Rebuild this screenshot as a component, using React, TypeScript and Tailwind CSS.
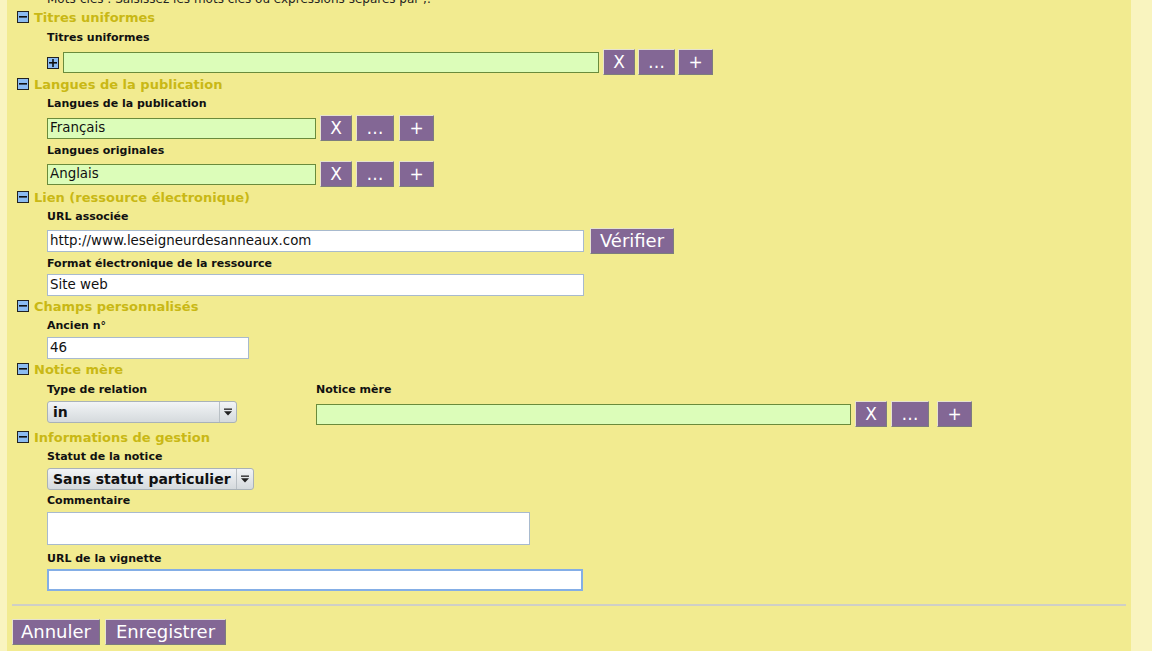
import React from 'react';

const font = { fontFamily: '"DejaVu Sans", Verdana, sans-serif' };

const Toggle = ({ open = true }: { open?: boolean }) => (
  <span className="inline-flex w-[12px] h-[12px] shrink-0 items-center justify-center border border-[#222] bg-[#8cbcf2]">
    <svg width="10" height="10" viewBox="0 0 10 10">
      <rect x="1" y="4" width="8" height="1.6" fill="#111" />
      {!open && <rect x="4.2" y="1" width="1.6" height="8" fill="#111" />}
    </svg>
  </span>
);

const Header = ({ title, h = 'h-[20px]' }: { title: string; h?: string }) => (
  <div className={`flex items-center gap-[5px] pl-[10px] ${h}`}>
    <Toggle />
    <span className="text-[13px] font-bold text-[#c9b815] leading-none">{title}</span>
  </div>
);

const Label = ({ children, h = 'h-[20px]' }: { children: React.ReactNode; h?: string }) => (
  <div className={`flex items-center pl-[40px] text-[11px] font-bold text-[#111] ${h}`}>{children}</div>
);

const Btn = ({ children, w, text = 'text-[17px]' }: { children: React.ReactNode; w: string; text?: string }) => (
  <button
    className={`${w} h-[26px] shrink-0 flex items-center justify-center bg-[#836795] text-white ${text} leading-none border border-t-[#e6e2d0] border-l-[#e6e2d0] border-b-[#7d7d7d] border-r-[#7d7d7d]`}
  >
    {children}
  </button>
);

const GreenInput = ({ w, value = '' }: { w: string; value?: string }) => (
  <div className={`${w} h-[21px] shrink-0 flex items-center px-[2px] bg-[#dcfdb9] border border-[#6a8b3c] text-[13.4px] text-[#111]`}>
    {value}
  </div>
);

const WhiteInput = ({ w, value = '', h = 'h-[22px]', focus = false }: { w: string; value?: string; h?: string; focus?: boolean }) => (
  <div
    className={`${w} ${h} shrink-0 flex items-center px-[2px] bg-white text-[13.4px] text-[#111] ${
      focus ? 'border-2 border-[#84aee6]' : 'border border-[#a8bace]'
    }`}
  >
    {value}
  </div>
);

const Select = ({ w, value }: { w: string; value: string }) => (
  <div className={`${w} h-[22px] shrink-0 flex items-stretch rounded-[3px] border border-[#a9b2b8] bg-gradient-to-b from-[#f2f4f6] to-[#d5dadd] text-[14px] font-bold text-[#111]`}>
    <span className="flex-1 flex items-center pl-[5px] whitespace-nowrap">{value}</span>
    <span className="w-[17px] flex items-center justify-center border-l border-[#b9c0c5]">
      <svg width="10" height="8" viewBox="0 0 10 8">
        <rect x="1" y="0.5" width="8" height="1.3" fill="#222" />
        <path d="M1 3.2 H9 L5 7.5 Z" fill="#222" />
      </svg>
    </span>
  </div>
);

export default function App() {
  return (
    <div className="flex w-[1152px] h-[651px] overflow-hidden bg-[#f9f4bf]" style={font}>
      <div className="w-[7px] shrink-0" />
      <div className="w-[1124px] shrink-0 bg-[#f2eb90] flex flex-col">
        <div className="-mt-[9px] h-[16px] pl-[40px] text-[12px] leading-[16px] text-[#222] whitespace-nowrap">
          Mots-clés : Saisissez les mots clés ou expressions séparés par ;.
        </div>

        <Header title="Titres uniformes" />
        <Label h="h-[22px]">Titres uniformes</Label>
        <div className="h-[26px] flex items-center pl-[40px]">
          <span className="mr-[4px] mt-[1px]"><Toggle open={false} /></span>
          <GreenInput w="w-[536px]" />
          <div className="flex gap-[3px] ml-[4px]">
            <Btn w="w-[32px]">X</Btn>
            <Btn w="w-[37px]">…</Btn>
            <Btn w="w-[35px]">+</Btn>
          </div>
        </div>

        <Header title="Langues de la publication" h="h-[18px]" />
        <Label h="h-[22px]">Langues de la publication</Label>
        <div className="h-[26px] flex items-center pl-[40px] gap-[4px]">
          <GreenInput w="w-[269px]" value="Français" />
          <Btn w="w-[32px]">X</Btn>
          <Btn w="w-[38px]">…</Btn>
          <span className="ml-[1px]"><Btn w="w-[35px]">+</Btn></span>
        </div>
        <Label>Langues originales</Label>
        <div className="h-[26px] flex items-center pl-[40px] gap-[4px]">
          <GreenInput w="w-[269px]" value="Anglais" />
          <Btn w="w-[32px]">X</Btn>
          <Btn w="w-[38px]">…</Btn>
          <span className="ml-[1px]"><Btn w="w-[35px]">+</Btn></span>
        </div>

        <Header title="Lien (ressource électronique)" />
        <Label h="h-[21px]">URL associée</Label>
        <div className="h-[26px] flex items-center pl-[40px] gap-[6px]">
          <WhiteInput w="w-[537px]" value="http://www.leseigneurdesanneaux.com" />
          <Btn w="w-[84px]" text="text-[18px]">Vérifier</Btn>
        </div>
        <Label>Format électronique de la ressource</Label>
        <div className="h-[22px] flex items-center pl-[40px]">
          <WhiteInput w="w-[537px]" value="Site web" />
        </div>

        <Header title="Champs personnalisés" />
        <Label h="h-[21px]">Ancien n°</Label>
        <div className="h-[22px] flex items-center pl-[40px]">
          <WhiteInput w="w-[202px]" value="46" />
        </div>

        <Header title="Notice mère" />
        <div className="h-[22px] flex items-center pl-[40px] text-[11px] font-bold text-[#111]">
          <span className="w-[269px]">Type de relation</span>
          <span>Notice mère</span>
        </div>
        <div className="h-[26px] flex items-start pl-[40px]">
          <Select w="w-[190px]" value="in" />
          <div className="ml-[79px] h-[26px] flex items-center gap-[4px]">
            <GreenInput w="w-[535px]" />
            <Btn w="w-[32px]">X</Btn>
            <Btn w="w-[38px]">…</Btn>
            <span className="ml-[4px]"><Btn w="w-[35px]">+</Btn></span>
          </div>
        </div>

        <Header title="Informations de gestion" />
        <Label h="h-[21px]">Statut de la notice</Label>
        <div className="h-[22px] flex items-center pl-[40px]">
          <Select w="w-[207px]" value="Sans statut particulier" />
        </div>
        <Label h="h-[22px]">Commentaire</Label>
        <div className="h-[33px] flex pl-[40px]">
          <WhiteInput w="w-[483px]" h="h-[33px]" />
        </div>
        <Label h="h-[24px] pt-[4px]">URL de la vignette</Label>
        <div className="h-[22px] flex items-center pl-[40px]">
          <WhiteInput w="w-[536px]" focus />
        </div>

        <div className="mt-[13px] ml-[5px] w-[1114px] h-[2px] bg-[#cfcfc6]" />

        <div className="mt-[13px] ml-[5px] flex gap-[5px]">
          <Btn w="w-[88px]" text="text-[18px]">Annuler</Btn>
          <Btn w="w-[121px]" text="text-[18px]">Enregistrer</Btn>
        </div>
      </div>
      <div className="flex-1" />
    </div>
  );
}
